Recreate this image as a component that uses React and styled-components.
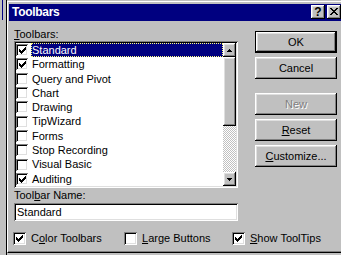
import React from 'react';
import styled, { createGlobalStyle, css } from 'styled-components';

const GlobalStyle = createGlobalStyle`
  html, body {
    margin: 0;
    padding: 0;
    background: #c0c0c0;
  }
  body {
    font-family: 'Liberation Sans', Arial, sans-serif;
    font-size: 11px;
    color: #000;
  }
`;

const toolbars = [
  { name: 'Standard', checked: true, selected: true },
  { name: 'Formatting', checked: true },
  { name: 'Query and Pivot' },
  { name: 'Chart' },
  { name: 'Drawing' },
  { name: 'TipWizard' },
  { name: 'Forms' },
  { name: 'Stop Recording' },
  { name: 'Visual Basic' },
  { name: 'Auditing', checked: true },
];

const sunken = css`
  box-shadow:
    inset 1px 1px #808080,
    inset -1px -1px #fff,
    inset 2px 2px #000,
    inset -2px -2px #dfdfdf;
`;

const raised = css`
  box-shadow:
    inset -1px -1px #000,
    inset 1px 1px #fff,
    inset -2px -2px #808080,
    inset 2px 2px #dfdfdf;
`;

const CheckMark = () => (
  <svg width='7' height='7' viewBox='0 0 7 7' shapeRendering='crispEdges' style={{ display: 'block' }}>
    <path d='M0 2h1v3H0zM1 3h1v3H1zM2 4h1v3H2zM3 3h1v3H3zM4 2h1v3H4zM5 1h1v3H5zM6 0h1v3H6z' fill='#000' />
  </svg>
);

const CloseGlyph = () => (
  <svg width='8' height='7' viewBox='0 0 8 7' shapeRendering='crispEdges' style={{ display: 'block' }}>
    <path
      d='M0 0h2v1H0zM6 0h2v1H6zM1 1h2v1H1zM5 1h2v1H5zM2 2h4v1H2zM3 3h2v1H3zM2 4h4v1H2zM1 5h2v1H1zM5 5h2v1H5zM0 6h2v1H0zM6 6h2v1H6z'
      fill='#000'
    />
  </svg>
);

const Arrow = ({ down }) => (
  <svg width='5' height='3' viewBox='0 0 5 3' shapeRendering='crispEdges' style={{ display: 'block' }}>
    <path d={down ? 'M0 0h5v1H0zM1 1h3v1H1zM2 2h1v1H2z' : 'M2 0h1v1H2zM1 1h3v1H1zM0 2h5v1H0z'} fill='#000' />
  </svg>
);

const CheckBox = ({ checked, size = 13 }) => (
  <Box $size={size}>{checked && <CheckMark />}</Box>
);

const App = () => {
  return (
    <>
      <GlobalStyle />
      <Screen>
        <BehindWindow>
          <BehindTitle />
        </BehindWindow>
        <Dialog>
          <TitleBar>
            <TitleText>Toolbars</TitleText>
            <TitleButtons>
              <TitleButton>?</TitleButton>
              <TitleButton><CloseGlyph /></TitleButton>
            </TitleButtons>
          </TitleBar>

          <MainRow>
            <LeftColumn>
              <FieldLabel $top={7}><Key>T</Key>oolbars:</FieldLabel>
              <ListBox>
                <Rows>
                  {toolbars.map((t) => (
                    <Row key={t.name}>
                      <CheckBox checked={t.checked} size={12} />
                      <RowLabel $selected={t.selected}>{t.name}</RowLabel>
                    </Row>
                  ))}
                </Rows>
                <ScrollBar>
                  <ScrollButton><Arrow /></ScrollButton>
                  <ScrollThumb />
                  <ScrollTrack />
                  <ScrollButton><Arrow down /></ScrollButton>
                </ScrollBar>
              </ListBox>
              <FieldLabel $top={1}>Tool<Key>b</Key>ar Name:</FieldLabel>
              <TextBox readOnly value='Standard' />
            </LeftColumn>

            <RightColumn>
              <Button $default>OK</Button>
              <Button>Cancel</Button>
              <Button $gap={10} disabled>New</Button>
              <Button><Key>R</Key>eset</Button>
              <Button><Key>C</Key>ustomize...</Button>
            </RightColumn>
          </MainRow>

          <BottomRow>
            <Option>
              <CheckBox checked />
              <span>C<Key>o</Key>lor Toolbars</span>
            </Option>
            <Option>
              <CheckBox />
              <span><Key>L</Key>arge Buttons</span>
            </Option>
            <Option>
              <CheckBox checked />
              <span><Key>S</Key>how ToolTips</span>
            </Option>
          </BottomRow>
        </Dialog>
      </Screen>
    </>
  );
};

export default App;

const Screen = styled.div`
  display: flex;
  width: 341px;
  height: 255px;
  overflow: hidden;
`;

const BehindWindow = styled.div`
  width: 6px;
  flex-shrink: 0;
  border-right: 1px solid #000;
`;

const BehindTitle = styled.div`
  margin-left: 2px;
  width: 1px;
  height: 20px;
  background: #000080;
`;

const Dialog = styled.div`
  flex: 1;
  min-width: 0;
  box-sizing: border-box;
  height: 252px;
  margin-top: 1px;
  border-top: 1px solid #fff;
  border-left: 1px solid #fff;
  border-bottom: 1px solid #000;
  box-shadow: inset 0 -1px #808080;
  padding: 2px 0 0 1px;
  display: flex;
  flex-direction: column;
`;

const TitleBar = styled.div`
  height: 17px;
  flex-shrink: 0;
  background: #000080;
  display: flex;
  align-items: flex-start;
  padding-left: 3px;
`;

const TitleText = styled.span`
  color: #fff;
  font-weight: 700;
  font-size: 12px;
  letter-spacing: -0.3px;
  line-height: 17px;
`;

const TitleButtons = styled.div`
  margin-left: auto;
  margin-top: 1px;
  display: flex;
  gap: 2px;
`;

const TitleButton = styled.div`
  width: 14px;
  height: 14px;
  box-sizing: border-box;
  background: #c0c0c0;
  ${raised}
  display: flex;
  align-items: center;
  justify-content: center;
  font-weight: 700;
  font-size: 12px;
  line-height: 1;
  padding-bottom: 1px;
`;

const MainRow = styled.div`
  display: flex;
  gap: 17px;
  padding-left: 5px;
`;

const LeftColumn = styled.div`
  width: 224px;
  display: flex;
  flex-direction: column;
`;

const FieldLabel = styled.div`
  line-height: 13px;
  margin-top: ${(p) => p.$top}px;
`;

const Key = styled.span`
  text-decoration: underline;
  text-underline-offset: 1px;
`;

const ListBox = styled.div`
  height: 147px;
  box-sizing: border-box;
  padding: 2px;
  background: #fff;
  display: flex;
  ${sunken}
`;

const Rows = styled.div`
  flex: 1;
  min-width: 0;
  display: flex;
  flex-direction: column;
`;

const Row = styled.div`
  height: 14.3px;
  display: flex;
  align-items: center;
`;

const Box = styled.span`
  width: ${(p) => p.$size}px;
  height: ${(p) => p.$size}px;
  flex-shrink: 0;
  box-sizing: border-box;
  padding: 3px 0 0 3px;
  background: #fff;
  ${sunken}
`;

const RowLabel = styled.span`
  flex: 1;
  align-self: stretch;
  margin-left: 3px;
  padding-left: 1px;
  line-height: 14.3px;
  white-space: nowrap;
  ${(p) =>
    p.$selected &&
    css`
      background: #000080;
      color: #fff;
      outline: 1px dotted #ffff80;
      outline-offset: -1px;
    `}
`;

const ScrollBar = styled.div`
  width: 13px;
  flex-shrink: 0;
  display: flex;
  flex-direction: column;
`;

const ScrollButton = styled.div`
  height: 14px;
  flex-shrink: 0;
  background: #c0c0c0;
  ${raised}
  display: flex;
  align-items: center;
  justify-content: center;
`;

const ScrollThumb = styled.div`
  height: 69px;
  flex-shrink: 0;
  background: #c0c0c0;
  ${raised}
`;

const ScrollTrack = styled.div`
  flex: 1;
  background: repeating-conic-gradient(#c0c0c0 0 25%, #fff 0 50%) 0 0 / 2px 2px;
`;

const TextBox = styled.input`
  margin-top: 1px;
  height: 18px;
  box-sizing: border-box;
  border: 0;
  padding: 2px 3px;
  background: #fff;
  font: inherit;
  line-height: 14px;
  color: #000;
  outline: none;
  ${sunken}
`;

const RightColumn = styled.div`
  width: 82px;
  padding-top: 10px;
  display: flex;
  flex-direction: column;
  gap: 4px;
`;

const Button = styled.button`
  height: 22px;
  margin-top: ${(p) => p.$gap || 0}px;
  box-sizing: border-box;
  padding: 0;
  background: #c0c0c0;
  font: inherit;
  color: #000;
  border: ${(p) => (p.$default ? '1px solid #000' : '0')};
  ${raised}
  &:disabled {
    color: #808080;
    text-shadow: 1px 1px #fff;
  }
`;

const BottomRow = styled.div`
  display: grid;
  grid-template-columns: 111px 108px auto;
  padding-left: 4px;
  margin-top: 11px;
`;

const Option = styled.div`
  display: flex;
  align-items: center;
  gap: 5px;
  line-height: 13px;
  white-space: nowrap;
`;
